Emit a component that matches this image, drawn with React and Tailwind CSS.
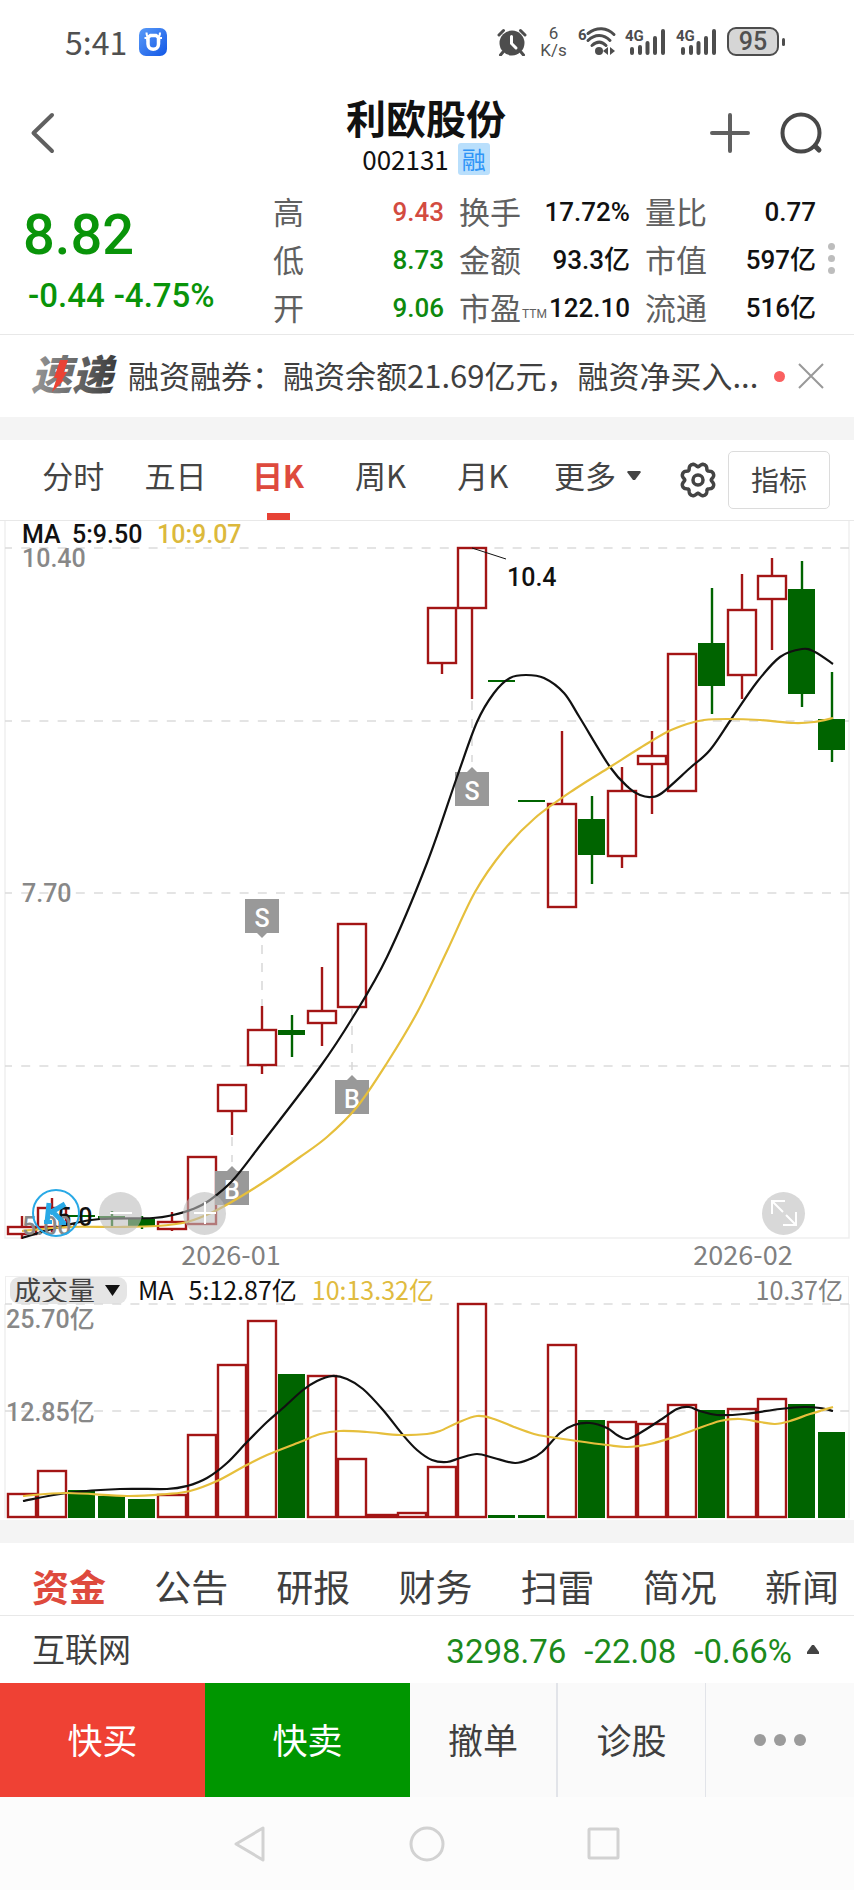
import { useState } from "react";

const RED = "#a31515";
const GREEN = "#006400";
const YELLOW = "#e6bf3c";

const quoteRows = [
  [
    { label: "高", value: "9.43", color: "text-[#d34b40]" },
    { label: "换手", value: "17.72%", color: "text-[#111]" },
    { label: "量比", value: "0.77", color: "text-[#111]" },
  ],
  [
    { label: "低", value: "8.73", color: "text-[#0d8a0d]" },
    { label: "金额", value: "93.3亿", color: "text-[#111]" },
    { label: "市值", value: "597亿", color: "text-[#111]" },
  ],
  [
    { label: "开", value: "9.06", color: "text-[#0d8a0d]" },
    { label: "市盈", sub: "TTM", value: "122.10", color: "text-[#111]" },
    { label: "流通", value: "516亿", color: "text-[#111]" },
  ],
];

const periods = ["分时", "五日", "日K", "周K", "月K"];
const infoTabs = ["资金", "公告", "研报", "财务", "扫雷", "简况", "新闻"];

// [up, body top, body bottom, wick top, wick bottom, volume top]
const candles = [
  [1, 1227, 1234, 1216, 1239, 1494],
  [1, 1208, 1227, 1198, 1232, 1471],
  [0, 1215, 1217, 1215, 1217, 1490],
  [0, 1216, 1219, 1211, 1226, 1496],
  [0, 1219, 1227, 1216, 1229, 1499],
  [1, 1222, 1229, 1212, 1231, 1495],
  [1, 1157, 1224, 1157, 1225, 1435],
  [1, 1085, 1111, 1085, 1135, 1365],
  [1, 1030, 1065, 1006, 1074, 1321],
  [0, 1030, 1035, 1015, 1057, 1374],
  [1, 1011, 1023, 967, 1046, 1376],
  [1, 924, 1007, 924, 1007, 1459],
  [1, 828, 828, 828, 828, 1515],
  [1, 723, 723, 723, 723, 1513],
  [1, 608, 663, 608, 674, 1467],
  [1, 548, 608, 548, 699, 1304],
  [0, 680, 682, 680, 682, 1515],
  [0, 800, 802, 800, 802, 1515],
  [1, 804, 907, 731, 907, 1345],
  [0, 819, 855, 796, 884, 1420],
  [1, 791, 856, 767, 868, 1422],
  [1, 756, 764, 731, 814, 1424],
  [1, 654, 791, 654, 791, 1405],
  [0, 643, 686, 588, 714, 1410],
  [1, 610, 675, 574, 699, 1409],
  [1, 576, 599, 558, 650, 1399],
  [0, 589, 694, 561, 707, 1404],
  [0, 719, 750, 672, 762, 1432],
].map(([up, top, bottom, high, low, vol], i) => ({
  x: 22 + i * 30,
  up: up === 1,
  top,
  bottom,
  high,
  low,
  vol,
}));

const ma5 = [
  [22, 1238], [67, 1225], [100, 1219], [153, 1218], [173, 1215], [193, 1209],
  [210, 1200], [233, 1180], [262, 1143], [320, 1067], [353, 1017], [387, 957],
  [427, 863], [457, 777], [477, 722], [494, 693], [510, 678], [526, 675],
  [544, 678], [564, 693], [580, 718], [610, 767], [629, 788], [640, 795],
  [651, 797], [662, 793], [690, 768], [710, 750], [732, 718], [757, 682],
  [780, 657], [802, 649], [815, 652], [833, 664],
];
const ma10 = [
  [22, 1231], [67, 1227], [117, 1227], [157, 1226], [187, 1222], [213, 1212],
  [240, 1197], [270, 1178], [300, 1157], [327, 1137], [357, 1107], [387, 1063],
  [418, 1011], [447, 951], [475, 892], [504, 850], [535, 818], [575, 789],
  [610, 767], [640, 748], [667, 732], [687, 724], [704, 720], [727, 719],
  [760, 720], [794, 723], [814, 722], [833, 718],
];
const volMa5 = [
  [23, 1501], [67, 1493], [120, 1489], [167, 1489], [187, 1486], [207, 1478],
  [227, 1463], [247, 1442], [267, 1422], [283, 1408], [303, 1390], [317, 1381],
  [332, 1376], [347, 1379], [363, 1389], [383, 1410], [403, 1435], [417, 1450],
  [432, 1460], [447, 1462], [460, 1458], [477, 1454], [494, 1458],
  [515, 1463], [530, 1459], [542, 1452], [560, 1433], [574, 1425], [590, 1423],
  [607, 1428], [617, 1435], [627, 1439], [640, 1433], [662, 1419], [677, 1409],
  [689, 1407], [700, 1411], [717, 1415], [744, 1414], [780, 1409], [804, 1407],
  [820, 1408], [833, 1411],
];
const volMa10 = [
  [23, 1496], [67, 1493], [127, 1496], [167, 1494], [190, 1491], [217, 1481],
  [243, 1467], [267, 1455], [300, 1442], [320, 1434], [340, 1431], [367, 1432],
  [400, 1435], [427, 1434], [440, 1431], [457, 1423], [477, 1416], [494, 1419],
  [514, 1427], [534, 1434], [550, 1437], [577, 1441], [607, 1445], [627, 1447],
  [650, 1444], [674, 1437], [694, 1430], [720, 1421], [740, 1419], [760, 1422],
  [775, 1424], [790, 1421], [810, 1414], [833, 1407],
];

// Catmull-Rom spline through the points
function smooth(points) {
  let d = `M${points[0][0]} ${points[0][1]}`;
  for (let i = 0; i < points.length - 1; i++) {
    const p0 = points[i - 1] || points[i];
    const p1 = points[i];
    const p2 = points[i + 1];
    const p3 = points[i + 2] || p2;
    d += `C${p1[0] + (p2[0] - p0[0]) / 6} ${p1[1] + (p2[1] - p0[1]) / 6} ${
      p2[0] - (p3[0] - p1[0]) / 6
    } ${p2[1] - (p3[1] - p1[1]) / 6} ${p2[0]} ${p2[1]}`;
  }
  return d;
}

// Eight-lobed outline of the settings icon
const gearPath =
  Array.from({ length: 96 }, (_, i) => {
    const a = (i / 96) * Math.PI * 2;
    const r = 15.2 - 1.7 * Math.cos(8 * a) - 0.3 * Math.cos(16 * a);
    return `${i ? "L" : "M"}${(18 + r * Math.cos(a)).toFixed(2)} ${(
      18 +
      r * Math.sin(a)
    ).toFixed(2)}`;
  }).join("") + "Z";

function SignalIcon() {
  return (
    <svg
      className="overflow-visible font-['Roboto',sans-serif]"
      width="42"
      height="30"
      viewBox="0 0 42 30"
      fill="none"
    >
      <text x="1" y="14" fontSize="15" fontWeight="700" fill="#4d4d4d">
        4G
      </text>
      <path
        d="M8 22V26M16 20V26M23.500 16V26M31 11V26M39 4V26"
        stroke="#4d4d4d"
        strokeWidth="4"
        strokeLinecap="round"
      />
    </svg>
  );
}

function StatusBar() {
  return (
    <div className="flex h-[84px] items-center pb-[1px] pl-[65px] pr-[69px] text-[#505050]">
      <span className="pb-[2px] text-[32px] leading-none">5:41</span>
      <svg className="ml-[12px]" width="28" height="28" viewBox="0 0 28 28">
        <defs>
          <linearGradient id="app" x1="0" y1="0" x2="1" y2="1">
            <stop offset="0" stopColor="#5a9bf8" />
            <stop offset="1" stopColor="#1257e6" />
          </linearGradient>
        </defs>
        <rect width="28" height="28" rx="7" fill="url(#app)" />
        <path
          d="M7.500 4.500C7.500 7 8 8.500 9.500 9.500M21 4.500C21 7 20.500 8.500 19 9.500M5.500 10H9L8 12.500M23 10H19.500L20.500 12.500"
          stroke="#fff"
          strokeWidth="2"
          fill="none"
        />
        <path
          d="M11.500 7.500H17L19.500 9.500V16C19.500 23 9 23 9 16V9.500Z"
          stroke="#fff"
          strokeWidth="3.500"
          fill="none"
        />
      </svg>

      <div className="ml-auto flex items-center">
        <svg width="30" height="28" viewBox="0 0 30 28" fill="none">
          <circle cx="15" cy="15" r="12.500" fill="#4d4d4d" />
          <path
            d="M2 7L6.500 2.500M28 7L23.500 2.500M6 24L3.500 27M24 24L26.500 27"
            stroke="#4d4d4d"
            strokeWidth="3"
            strokeLinecap="round"
          />
          <path
            d="M14.500 8.500V15.500L19 20"
            stroke="#fff"
            strokeWidth="3"
            strokeLinecap="round"
          />
        </svg>
        <div className="ml-[13px] flex w-[27px] flex-col items-center font-['Roboto',sans-serif] text-[17px] leading-[17px]">
          <span>6</span>
          <span>K/s</span>
        </div>
        <svg
          className="ml-[10px] overflow-visible font-['Roboto',sans-serif]"
          width="40"
          height="30"
          viewBox="0 0 40 30"
          fill="none"
        >
          <text x="1" y="13" fontSize="15" fontWeight="700" fill="#4d4d4d">
            6
          </text>
          <g stroke="#4d4d4d" strokeWidth="3" strokeLinecap="round">
            <path d="M11 6.500C20 -0.500 30 0.500 37 7.500" />
            <path d="M11 13.500C18 6.500 27 7 33 13.500" />
            <path d="M15 18.500C20 14 25 14.500 29 18.500" />
          </g>
          <circle cx="22" cy="24" r="4" fill="#4d4d4d" />
          <path d="M26 24L31 20V28ZM38 24L33 20V28Z" fill="#4d4d4d" />
        </svg>
        <div className="ml-[7px] flex gap-[9px]">
          <SignalIcon />
          <SignalIcon />
        </div>
        <div className="ml-[10px] flex h-[29px] w-[52px] items-center justify-center rounded-[9px] border-2 border-[#4d4d4d] bg-[#d6d6d6] font-['Roboto',sans-serif] text-[25px] font-medium leading-none">
          95
        </div>
        <div className="ml-[3px] h-[8px] w-[3px] rounded-sm bg-[#4d4d4d]" />
      </div>
    </div>
  );
}

function Header() {
  return (
    <header className="grid h-[104px] grid-cols-[1fr_auto_1fr] items-center pb-[6px] pl-[29px] pr-[31px]">
      <button aria-label="返回" className="justify-self-start">
        <svg width="26" height="44" viewBox="0 0 26 44" fill="none">
          <path
            d="M23 4L4.500 22L23 40"
            stroke="#606060"
            strokeWidth="4"
            strokeLinecap="round"
            strokeLinejoin="round"
          />
        </svg>
      </button>
      <div className="flex flex-col items-center">
        <h1 className="text-[40px] font-bold leading-[52px] text-[#111]">
          利欧股份
        </h1>
        <div className="flex h-[32px] items-center gap-[9px] text-[26px] leading-none text-[#111]">
          <span>002131</span>
          <span className="flex size-[32px] items-center justify-center rounded-[3px] bg-[#b9dffc] text-[24px] text-[#2f95f7]">
            融
          </span>
        </div>
      </div>
      <div className="flex items-center gap-[27px] justify-self-end">
        <button aria-label="添加自选">
          <svg width="44" height="44" viewBox="0 0 44 44">
            <path
              d="M22 4V40M4 22H40"
              stroke="#606060"
              strokeWidth="4"
              strokeLinecap="round"
            />
          </svg>
        </button>
        <button aria-label="搜索">
          <svg width="44" height="44" viewBox="0 0 44 44" fill="none">
            <circle cx="22" cy="22" r="18.500" stroke="#484848" strokeWidth="4" />
            <path
              d="M36 35L40 39"
              stroke="#484848"
              strokeWidth="5"
              strokeLinecap="round"
            />
          </svg>
        </button>
      </div>
    </header>
  );
}

function Quote() {
  return (
    <section className="flex h-[147px] border-b border-[#e8e8e8]">
      <div className="w-[273px] pl-[23px] pt-[16px] font-['Roboto',sans-serif] font-medium text-[#099409]">
        <div className="text-[56px] leading-[62px]">8.82</div>
        <div className="flex gap-[9px] pl-[5px] pt-[10px] text-[33px] leading-[40px]">
          <span>-0.44</span>
          <span>-4.75%</span>
        </div>
      </div>
      <div className="flex flex-1 flex-col">
        {quoteRows.map((row) => (
          <div
            key={row[0].label}
            className="grid h-[48px] grid-cols-3 gap-[15px]"
          >
            {row.map((cell) => (
              <div key={cell.label} className="flex items-center">
                <span className="whitespace-nowrap pb-[4px] text-[31px] leading-none text-[#606060]">
                  {cell.label}
                </span>
                {cell.sub && (
                  <span className="mt-[12px] pl-px font-['Roboto',sans-serif] text-[12px] leading-none text-[#606060]">
                    {cell.sub}
                  </span>
                )}
                <span
                  className={`ml-auto whitespace-nowrap font-['Roboto','Noto_Sans_CJK_SC',sans-serif] text-[26px] font-medium leading-none ${cell.color}`}
                >
                  {cell.value}
                </span>
              </div>
            ))}
          </div>
        ))}
      </div>
      <button
        aria-label="更多行情"
        className="flex w-[38px] flex-col items-start justify-center gap-[5px] pb-[5px] pl-[12px]"
      >
        <i className="size-[7px] rounded-full bg-[#bdbdbd]" />
        <i className="size-[7px] rounded-full bg-[#bdbdbd]" />
        <i className="size-[7px] rounded-full bg-[#bdbdbd]" />
      </button>
    </section>
  );
}

function NewsBar() {
  return (
    <section className="flex h-[82px] items-center pl-[30px] pr-[30px]">
      <svg
        width="90"
        height="40"
        viewBox="0 0 90 40"
        className="shrink-0 overflow-visible"
      >
        <defs>
          <linearGradient id="express" x1="0" y1="0" x2="1" y2="0">
            <stop offset="0" stopColor="#999" />
            <stop offset="1" stopColor="#3c3c3c" />
          </linearGradient>
        </defs>
        <text
          x="1"
          y="34"
          fontSize="41"
          fontWeight="900"
          fontStyle="italic"
          fill="url(#express)"
        >
          速递
        </text>
        <path d="M30 4H38L34 16H37L32 24H34L22 36L27 22H24Z" fill="#ea4335" />
      </svg>
      <a
        href="#news"
        className="ml-[8px] min-w-0 flex-1 truncate pb-[2px] text-[31px] leading-[44px] text-[#3f3f3f]"
      >
        融资融券：融资余额21.69亿元，融资净买入...
      </a>
      <i className="ml-[10px] size-[11px] shrink-0 rounded-full bg-[#fa6060]" />
      <button aria-label="关闭" className="ml-[13px]">
        <svg width="26" height="26" viewBox="0 0 26 26">
          <path d="M1 1L25 25M25 1L1 25" stroke="#999" strokeWidth="2" />
        </svg>
      </button>
    </section>
  );
}

function PeriodTabs() {
  const [period, setPeriod] = useState("日K");

  return (
    <nav className="flex h-[81px] items-center border-b border-[#e8e8e8] pl-[22px] pr-[24px] text-[31px] leading-none text-[#444]">
      {periods.map((name) => (
        <button
          key={name}
          onClick={() => setPeriod(name)}
          className={`flex h-full flex-1 flex-col items-center justify-between pt-[19px] ${
            name === period ? "font-bold text-[#de4a3d]" : ""
          }`}
        >
          {name}
          <i
            className={`h-[7px] w-[23px] ${
              name === period ? "bg-[#e74235]" : ""
            }`}
          />
        </button>
      ))}
      <button className="ml-[20px] flex h-full items-start gap-[11px] pt-[19px]">
        更多
        <svg className="mt-[12px]" width="14" height="10" viewBox="0 0 14 10">
          <path d="M1 0H13L14 1L8 9H6L0 1Z" fill="#444" />
        </svg>
      </button>
      <button aria-label="设置" className="ml-[39px]">
        <svg width="36" height="36" viewBox="0 0 36 36" fill="none">
          <g stroke="#444" strokeWidth="3.500" strokeLinejoin="round">
            <path d={gearPath} />
            <circle cx="18" cy="18" r="5" />
          </g>
        </svg>
      </button>
      <button className="ml-[12px] h-[58px] w-[102px] rounded-[5px] border border-[#dcdcdc] pb-[2px] text-[28px]">
        指标
      </button>
    </nav>
  );
}

function GridLine({ y }) {
  return (
    <path
      d={`M5 ${y}H849`}
      stroke="#dcdcdc"
      strokeWidth="1.500"
      strokeDasharray="9 9.200"
      strokeDashoffset="2"
    />
  );
}

function Candle({ x, up, top, bottom, high, low }) {
  const color = up ? RED : GREEN;
  return (
    <g stroke={color} strokeWidth="2.400">
      {high < top && <path d={`M${x} ${high}V${top}`} />}
      {low > bottom && <path d={`M${x} ${bottom}V${low}`} />}
      {up ? (
        <rect
          x={x - 14}
          y={top}
          width="28"
          height={bottom - top}
          fill="none"
        />
      ) : (
        <rect
          x={x - 14}
          y={top}
          width="27"
          height={bottom - top}
          fill={GREEN}
          stroke="none"
        />
      )}
    </g>
  );
}

function Marker({ x, y, label, down, from, to }) {
  const tip = down ? y + 34 : y;
  const dir = down ? 5 : -5;
  return (
    <g>
      <path
        d={`M${x} ${from}V${to}`}
        stroke="#d8d8d8"
        strokeWidth="1.500"
        strokeDasharray="9 9"
      />
      <rect x={x - 17} y={y} width="34" height="34" fill="#999" />
      <path d={`M${x - 5} ${tip}L${x} ${tip + dir}L${x + 5} ${tip}Z`} fill="#999" />
      <text
        x={x}
        y={y + 28}
        textAnchor="middle"
        fontSize="25"
        fontWeight="500"
        fill="#fff"
      >
        {label}
      </text>
    </g>
  );
}

function PriceChart() {
  return (
    <div className="relative">
      <svg
        viewBox="0 521 854 755"
        className="block h-auto w-full font-['Roboto','Noto_Sans_CJK_SC',sans-serif]"
        fontSize="25"
        fontWeight="500"
        fill="none"
      >
        <path d="M5 521V1238H849V521" stroke="#efefef" strokeWidth="1.500" />
        <GridLine y={548} />
        <GridLine y={721} />
        <GridLine y={893} />
        <GridLine y={1066} />

        {candles.map((c) => (
          <Candle key={c.x} {...c} />
        ))}

        <Marker x={472} y={772} label="S" from={701} to={762} />
        <Marker x={262} y={899} label="S" down from={945} to={1006} />
        <Marker x={352} y={1080} label="B" from={1008} to={1070} />
        <Marker x={232} y={1171} label="B" from={1137} to={1162} />

        <path d="M472 548L506 559" stroke="#111" />
        <text x="507" y="586" fill="#111">10.4</text>
        <path d="M22 1238L57 1226" stroke="#111" />
        <text x="57" y="1226" fill="#111">5.0</text>

        <path d={smooth(ma5)} stroke="#111" strokeWidth="2.200" />
        <path d={smooth(ma10)} stroke={YELLOW} strokeWidth="2.200" />

        <text x="22" y="543" fill="#111">MA</text>
        <text x="72" y="543" fill="#111">5:9.50</text>
        <text x="157" y="543" fill="#dcb93c">10:9.07</text>
        <g fill="#888">
          <text x="22" y="567">10.40</text>
          <text x="22" y="902">7.70</text>
          <text x="22" y="1235">5.00</text>
        </g>
        <g
          fill="#808080"
          fontSize="27"
          fontWeight="400"
          textAnchor="middle"
          className="font-['Noto_Sans_CJK_SC',sans-serif]"
        >
          <text x="231" y="1265">2026-01</text>
          <text x="743" y="1265">2026-02</text>
        </g>
      </svg>

      {/* Chart controls */}
      <div className="absolute inset-x-0 bottom-[39px] flex items-center pl-[32px] pr-[49px]">
        <button aria-label="K线助手">
          <svg width="48" height="48" viewBox="0 0 48 48" fill="none">
            <circle cx="24" cy="24" r="23" stroke="#29a9e6" strokeWidth="2" />
            <g stroke="#29a9e6" strokeWidth="5">
              <path d="M17 14L15 34M33 15L18 24M21 23L32 34" />
              <path d="M12 33H20M27 34H34" strokeWidth="4" />
            </g>
          </svg>
        </button>
        <button
          aria-label="缩小"
          className="ml-[19px] flex size-[43px] items-center justify-center rounded-full bg-[#bdbdbd]/60"
        >
          <svg width="24" height="24" viewBox="0 0 24 24">
            <path d="M1 12H23" stroke="#fff" strokeWidth="2" />
          </svg>
        </button>
        <button
          aria-label="放大"
          className="ml-[41px] flex size-[43px] items-center justify-center rounded-full bg-[#bdbdbd]/60"
        >
          <svg width="24" height="24" viewBox="0 0 24 24">
            <path d="M1 12H23M12 1V23" stroke="#fff" strokeWidth="2" />
          </svg>
        </button>
        <button
          aria-label="全屏"
          className="ml-auto flex size-[43px] items-center justify-center rounded-full bg-[#d8d8d8]"
        >
          <svg width="28" height="28" viewBox="0 0 28 28" fill="none">
            <path
              d="M2 15V2H15M2 2L13 13M26 13V26H13M26 26L16 16"
              stroke="#fff"
              strokeWidth="2"
            />
          </svg>
        </button>
      </div>
    </div>
  );
}

function VolumeChart() {
  return (
    <section>
      <div className="mx-[5px] flex h-[28px] items-center border-x border-t border-[#efefef] pl-[4px] pr-[5px] text-[25px] leading-none">
        <label className="flex h-[27px] items-center gap-[10px] rounded-[9px] bg-[#e5e5e5] pl-[4px] pr-[7px]">
          <select
            aria-label="副图指标"
            className="h-[27px] w-[81px] appearance-none overflow-visible bg-transparent p-0 pb-[2px] text-[27px] leading-[25px] text-[#444]"
          >
            <option>成交量</option>
          </select>
          <svg width="15" height="11" viewBox="0 0 15 11">
            <path d="M0 0H15L7.500 11Z" fill="#111" />
          </svg>
        </label>
        <div className="flex flex-1 items-center pb-[2px] pl-[11px]">
          <span className="text-[#111]">MA</span>
          <span className="ml-[15px] text-[#111]">5:12.87亿</span>
          <span className="ml-[15px] text-[#e0bb40]">10:13.32亿</span>
          <span className="ml-auto text-[#808080]">10.37亿</span>
        </div>
      </div>
      <svg
        viewBox="0 1304 854 216"
        className="block h-auto w-full overflow-visible font-['Roboto','Noto_Sans_CJK_SC',sans-serif]"
        fontSize="25"
        fontWeight="500"
        fill="none"
      >
        <path d="M5 1304V1518M849 1304V1518" stroke="#efefef" strokeWidth="1.500" />
        <GridLine y={1304} />
        <GridLine y={1411} />
        {candles.map((c) => (
          <Candle
            key={c.x}
            x={c.x}
            up={c.up}
            top={c.vol}
            bottom={c.up ? 1517 : 1518}
            high={c.vol}
            low={c.vol}
          />
        ))}
        <path d={smooth(volMa5)} stroke="#111" strokeWidth="2.200" />
        <path d={smooth(volMa10)} stroke={YELLOW} strokeWidth="2.200" />
        <g fill="#888">
          <text x="6" y="1328">25.70亿</text>
          <text x="6" y="1421">12.85亿</text>
        </g>
      </svg>
    </section>
  );
}

function InfoTabs() {
  const [tab, setTab] = useState("资金");

  return (
    <section>
      <nav className="flex h-[73px] justify-between border-b border-[#e8e8e8] pl-[32px] pr-[15px] pt-[25px] text-[37px] leading-[37px] text-[#3f3f3f]">
        {infoTabs.map((name) => (
          <button
            key={name}
            onClick={() => setTab(name)}
            className={`h-[37px] whitespace-nowrap ${
              name === tab ? "font-bold text-[#de4a3d]" : ""
            }`}
          >
            {name}
          </button>
        ))}
      </nav>
      <div className="flex h-[67px] items-center pl-[32px] pr-[35px] text-[#1c8a1c]">
        <span className="pb-[3px] text-[33px] leading-none text-[#3f3f3f]">
          互联网
        </span>
        <div className="ml-auto flex gap-[18px] pt-[4px] font-['Roboto',sans-serif] text-[33px] leading-none">
          <span>3298.76</span>
          <span>-22.08</span>
          <span>-0.66%</span>
        </div>
        <svg className="ml-[15px]" width="12" height="10" viewBox="0 0 12 10">
          <path d="M5 0H7L12 7V9H0V7Z" fill="#444" />
        </svg>
      </div>
    </section>
  );
}

function TradeBar() {
  return (
    <div className="grid h-[114px] grid-cols-[205fr_205fr_148fr_148fr_148fr] bg-[#fafafa] text-[35px] leading-none text-[#3f3f3f]">
      <button className="bg-[#ef4134] pb-[4px] text-white">快买</button>
      <button className="bg-[#009600] pb-[4px] text-white">快卖</button>
      <button className="border-r-2 border-[#e2e4e9] pb-[4px]">撤单</button>
      <button className="border-r border-[#e2e4e9] pb-[4px]">诊股</button>
      <button
        aria-label="更多"
        className="flex items-center justify-center gap-[8px]"
      >
        <i className="size-[12px] rounded-full bg-[#9b9b9b]" />
        <i className="size-[12px] rounded-full bg-[#9b9b9b]" />
        <i className="size-[12px] rounded-full bg-[#9b9b9b]" />
      </button>
    </div>
  );
}

function SystemNav() {
  return (
    <div className="flex h-[93px] items-center justify-center gap-[141px] bg-[#fcfcfc]">
      <button aria-label="后退">
        <svg width="36" height="36" viewBox="0 0 36 36" fill="none">
          <path
            d="M4 18L31 2V34Z"
            stroke="#d2d2d2"
            strokeWidth="3"
            strokeLinejoin="round"
          />
        </svg>
      </button>
      <button aria-label="主页">
        <svg width="36" height="36" viewBox="0 0 36 36" fill="none">
          <circle cx="18" cy="18" r="16" stroke="#d2d2d2" strokeWidth="3" />
        </svg>
      </button>
      <button aria-label="最近任务">
        <svg width="36" height="36" viewBox="0 0 36 36" fill="none">
          <rect
            x="3"
            y="3"
            width="29"
            height="29"
            rx="1"
            stroke="#d2d2d2"
            strokeWidth="3"
          />
        </svg>
      </button>
    </div>
  );
}

export default function App() {
  return (
    <div className="bg-white font-['Noto_Sans_CJK_SC',sans-serif]">
      <StatusBar />
      <Header />
      <Quote />
      <NewsBar />
      <div className="h-[23px] bg-[#f4f4f4]" />
      <PeriodTabs />
      <PriceChart />
      <VolumeChart />
      <div className="h-[23px] bg-[#f4f4f4]" />
      <InfoTabs />
      <TradeBar />
      <SystemNav />
    </div>
  );
}
